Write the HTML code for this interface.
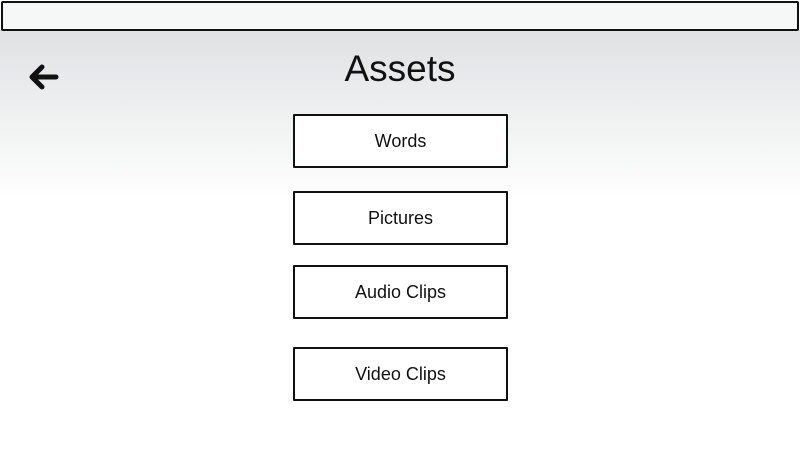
<!DOCTYPE html>
<html><head><style>
body{margin:0;width:800px;height:450px;overflow:hidden;background:#fff;font-family:"Liberation Sans",sans-serif;position:relative}
.bg{position:absolute;left:0;top:30px;width:800px;height:170px;background:linear-gradient(#dfe1e2,#fff)}
.bar{position:absolute;left:1px;top:1px;width:794px;height:26px;border:2px solid #111;background:#f6f8f7;border-radius:2px}
.t{position:absolute;left:0;width:800px;top:48px;text-align:center;font-size:37px;color:#111}
.b{position:absolute;left:293px;width:211px;height:50px;border:2px solid #111;background:#fff;text-align:center;line-height:50px;font-size:18px;color:#111;border-radius:1px}
</style></head><body>
<div class="bg"></div>
<div class="bar"></div>
<svg style="position:absolute;left:28px;top:62px" width="32" height="32" viewBox="0 0 32 32"><path d="M14 5 L4 15 L14 25 M4 15 L28 15" fill="none" stroke="#111" stroke-width="5" stroke-linecap="round" stroke-linejoin="round"/></svg>
<div class="t">Assets</div>
<div class="b" style="top:114px">Words</div>
<div class="b" style="top:191px">Pictures</div>
<div class="b" style="top:265px">Audio Clips</div>
<div class="b" style="top:347px">Video Clips</div>
</body></html>
